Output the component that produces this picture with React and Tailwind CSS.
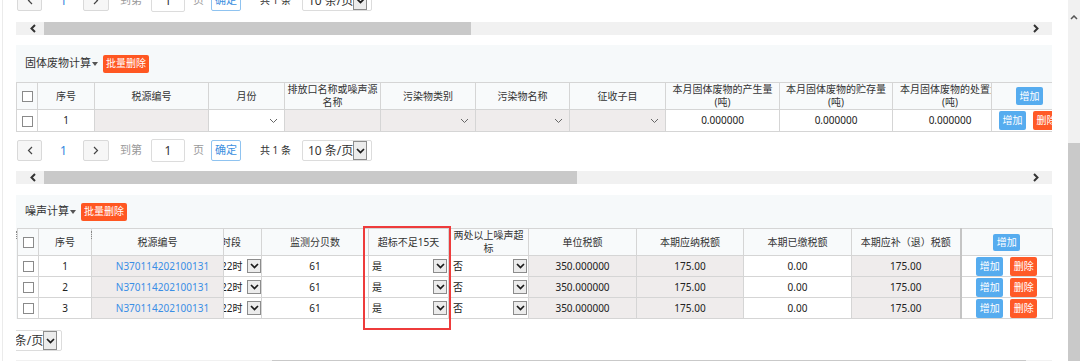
import React from 'react'

const FONT = "font-['Noto_Sans','Noto_Sans_CJK_SC',sans-serif]"
const th = 'border border-[#d5d5d5] bg-[#f8fafb] p-0 text-center align-middle text-[10px] font-normal leading-[13px]'
const td = 'border border-[#d5d5d5] p-0 text-center align-middle text-[10px] leading-[13px]'
const gray = 'bg-[#efecec]'

function Caret() {
  return <span className="ml-[1px] inline-block h-0 w-0 border-x-[3.5px] border-t-[4px] border-x-transparent border-t-[#555] align-middle" />
}

function Thin() {
  return (
    <svg width="9" height="6" viewBox="0 0 9 6">
      <path d="M1 1l3.5 3.5L8 1" fill="none" stroke="#666" strokeWidth="1" />
    </svg>
  )
}

function ArrowBox({ className = 'h-[14px] w-[14px]' }) {
  return (
    <span className={`flex shrink-0 items-center justify-center border border-[#8c8c8c] bg-[#ececec] ${className}`}>
      <svg width="9" height="6" viewBox="0 0 9 6">
        <path d="M1 1l3.5 3.5L8 1" fill="none" stroke="#1a1a1a" strokeWidth="1.7" />
      </svg>
    </span>
  )
}

function Check() {
  return <span className="inline-block h-[11px] w-[11px] border border-[#8a8a8a] bg-white align-middle" />
}

function Btn({ children, red = false, h = 'h-[19px]' }) {
  return (
    <span className={`inline-flex w-[27px] items-center justify-center rounded-[2px] text-[10px] text-white ${h} ${red ? 'bg-[#ff5a27]' : 'bg-[#56acef]'}`}>
      {children}
    </span>
  )
}

function PageSelect() {
  return (
    <span className="flex h-[21px] w-[70px] items-center justify-between whitespace-nowrap rounded-[2px] border border-[#dcdcdc] bg-white pl-[5px] pr-[4px] text-[12px] text-[#333]">
      <span>10 条/页</span>
      <ArrowBox className="h-[19px] w-[14px]" />
    </span>
  )
}

function Arrow({ dir }) {
  return (
    <svg width="6" height="9" viewBox="0 0 6 9">
      <path d={dir === 'left' ? 'M5 1L1.5 4.5 5 8' : 'M1 1l3.5 3.5L1 8'} fill="none" stroke="#444" strokeWidth="1.2" />
    </svg>
  )
}

function Pager({ className = '' }) {
  return (
    <div className={`flex h-[23px] items-center whitespace-nowrap pl-[1px] text-[10px] text-[#333] ${className}`}>
      <span className="flex h-[21px] w-[25px] items-center justify-center rounded-[2px] border border-[#d9d9d9] bg-[#f6f6f6]">
        <Arrow dir="left" />
      </span>
      <span className="ml-[18px] w-[7px] text-[12px] text-[#2f86de]">1</span>
      <span className="ml-[16px] flex h-[21px] w-[26px] items-center justify-center rounded-[2px] border border-[#d9d9d9] bg-[#f6f6f6]">
        <Arrow dir="right" />
      </span>
      <span className="ml-[11px] text-[11px] text-[#9a9a9a]">到第</span>
      <span className="ml-[9px] flex h-[23px] w-[34px] items-center justify-center rounded-[2px] border border-[#dcdcdc] bg-white text-[12px]">1</span>
      <span className="ml-[8px] text-[11px] text-[#9a9a9a]">页</span>
      <span className="ml-[7px] flex h-[21px] w-[30px] items-center justify-center rounded-[2px] border border-[#8fc3f0] bg-white text-[11px] text-[#3d8fe0]">确定</span>
      <span className="ml-[19px]">共 1 条</span>
      <span className="ml-[11px]"><PageSelect /></span>
    </div>
  )
}

function HScroll({ thumb, className = '' }) {
  return (
    <div className={`flex h-[13px] items-center bg-[#f1f1f1] ${className}`}>
      <span className="flex w-[28px] pl-[14px]">
        <svg width="6" height="9" viewBox="0 0 6 9"><path d="M5 1L1.5 4.5 5 8" fill="none" stroke="#333" strokeWidth="2" /></svg>
      </span>
      <span className={`h-full bg-[#c9c9c9] ${thumb}`} />
      <span className="flex flex-1 justify-end pr-[13px]">
        <svg width="6" height="9" viewBox="0 0 6 9"><path d="M1 1l3.5 3.5L1 8" fill="none" stroke="#333" strokeWidth="2" /></svg>
      </span>
    </div>
  )
}

function Title({ text }) {
  return (
    <div className="flex items-center pl-[9px]">
      <span className="text-[11px] text-[#333]">{text}</span>
      <Caret />
      <span className="ml-[5px] flex h-[18px] items-center rounded-[2px] bg-[#ff5722] px-[3px] text-[10px] text-white">批量删除</span>
    </div>
  )
}

function SelCell({ cls }) {
  return (
    <td className={`${td} ${cls}`}>
      <div className="flex justify-end pr-[6px]"><Thin /></div>
    </td>
  )
}

function SolidWaste({ className = '' }) {
  return (
    <div className={`bg-[#f6f9fa] ${className}`}>
      <div className="flex h-[37px] items-center">
        <Title text="固体废物计算" />
      </div>
      <div className="w-[1036px] overflow-hidden">
        <table className="w-[1051px] table-fixed border-collapse text-[#333]">
          <colgroup>
            <col className="w-[21px]" />
            <col className="w-[57px]" />
            <col className="w-[114px]" />
            <col className="w-[76px]" />
            <col className="w-[96px]" />
            <col className="w-[95px]" />
            <col className="w-[94px]" />
            <col className="w-[96px]" />
            <col className="w-[114px]" />
            <col className="w-[113px]" />
            <col className="w-[99px]" />
            <col className="w-[76px]" />
          </colgroup>
          <thead>
            <tr className="h-[25px]">
              <th className={th}><Check /></th>
              <th className={th}>序号</th>
              <th className={th}>税源编号</th>
              <th className={th}>月份</th>
              <th className={th}>排放口名称或噪声源<br />名称</th>
              <th className={th}>污染物类别</th>
              <th className={th}>污染物名称</th>
              <th className={th}>征收子目</th>
              <th className={th}>本月固体废物的产生量<br />(吨)</th>
              <th className={th}>本月固体废物的贮存量<br />(吨)</th>
              <th className={`${th} overflow-hidden`}>
                <div className="w-[114px] whitespace-nowrap">本月固体废物的处置量<br />(吨)</div>
              </th>
              <th className={th}><Btn h="h-[18px]">增加</Btn></th>
            </tr>
          </thead>
          <tbody className="text-[#222]">
            <tr className="h-[22px]">
              <td className={`${td} bg-white`}><Check /></td>
              <td className={`${td} bg-white`}>1</td>
              <td className={`${td} ${gray}`} />
              <SelCell cls="bg-white" />
              <td className={`${td} ${gray}`} />
              <SelCell cls={gray} />
              <SelCell cls={gray} />
              <SelCell cls={gray} />
              <td className={`${td} bg-white`}>0.000000</td>
              <td className={`${td} bg-white`}>0.000000</td>
              <td className={`${td} overflow-hidden bg-white`}>
                <div className="w-[114px]">0.000000</div>
              </td>
              <td className={`${td} bg-white`}>
                <div className="flex justify-center gap-[7px]"><Btn>增加</Btn><Btn red>删除</Btn></div>
              </td>
            </tr>
          </tbody>
        </table>
      </div>
    </div>
  )
}

const noiseRows = ['1', '2', '3']

function Noise({ className = '' }) {
  return (
    <div className={`bg-[#f6f9fa] ${className}`}>
      <div className="flex h-[33px] items-center">
        <Title text="噪声计算" />
      </div>
      <div className="relative pl-[1px]">
        <table className="w-[1035px] table-fixed border-collapse text-[#333]">
          <colgroup>
            <col className="w-[21px]" />
            <col className="w-[53px]" />
            <col className="w-[132px]" />
            <col className="w-[38px]" />
            <col className="w-[107px]" />
            <col className="w-[80px]" />
            <col className="w-[80px]" />
            <col className="w-[108px]" />
            <col className="w-[107px]" />
            <col className="w-[108px]" />
            <col className="w-[109px]" />
            <col className="w-[92px]" />
          </colgroup>
          <thead>
            <tr className="h-[26px]">
              <th className={th}><Check /></th>
              <th className={th}>序号</th>
              <th className={th}>税源编号</th>
              <th className={`${th} overflow-hidden`}>
                <div className="-ml-[3px] text-left whitespace-nowrap">时段</div>
              </th>
              <th className={th}>监测分贝数</th>
              <th className={th}>超标不足15天</th>
              <th className={th}>两处以上噪声超<br />标</th>
              <th className={th}>单位税额</th>
              <th className={th}>本期应纳税额</th>
              <th className={th}>本期已缴税额</th>
              <th className={`${th} border-r-2 border-r-[#c4c4c4]`}>本期应补（退）税额</th>
              <th className={th}><Btn h="h-[17px]">增加</Btn></th>
            </tr>
          </thead>
          <tbody className="text-[#222]">
            {noiseRows.map((n) => (
              <tr key={n} className="h-[21px]">
                <td className={`${td} bg-white`}><Check /></td>
                <td className={`${td} bg-white`}>{n}</td>
                <td className={`${td} ${gray} pl-[10px]`}>
                  <span className="text-[#3a8ee6]">N370114202100131</span>
                </td>
                <td className={`${td} overflow-hidden bg-white`}>
                  <div className="-ml-[3px] flex items-center whitespace-nowrap">
                    <span>22时</span>
                    <span className="ml-[5px]"><ArrowBox /></span>
                  </div>
                </td>
                <td className={`${td} bg-white`}>61</td>
                <td className={`${td} bg-white`}>
                  <div className="flex items-center justify-between pl-[3px] pr-[1px]">
                    <span>是</span>
                    <ArrowBox />
                  </div>
                </td>
                <td className={`${td} bg-white`}>
                  <div className="flex items-center justify-between pl-[4px] pr-[1px]">
                    <span>否</span>
                    <ArrowBox />
                  </div>
                </td>
                <td className={`${td} ${gray}`}>350.000000</td>
                <td className={`${td} ${gray}`}>175.00</td>
                <td className={`${td} bg-white`}>0.00</td>
                <td className={`${td} ${gray} border-r-2 border-r-[#c4c4c4]`}>175.00</td>
                <td className={`${td} bg-white`}>
                  <div className="flex justify-center gap-[7px]"><Btn>增加</Btn><Btn red>删除</Btn></div>
                </td>
              </tr>
            ))}
          </tbody>
        </table>
        <span className="absolute left-0 top-[3px] h-[8px] border-l border-dotted border-[#888]" />
        <span className="absolute left-[75px] top-[3px] h-[8px] border-l border-dotted border-[#888]" />
        <div className="absolute left-[347px] top-[-2px] h-[104px] w-[88px] border-2 border-[#ee3b3b]" />
      </div>
    </div>
  )
}

export default function App() {
  return (
    <div className={`flex h-[361px] w-[1080px] overflow-hidden bg-white ${FONT}`}>
      <div className="ml-[2px] w-[1066px] shrink-0 border-l border-[#ebebeb] pl-[13px] pr-[16px]">
        <div className="-mt-[11px] flex flex-col">
          <Pager />
          <HScroll thumb="w-[427px]" className="mt-[10px]" />
          <SolidWaste className="mt-[10px]" />
          <Pager className="mt-[7px]" />
          <HScroll thumb="w-[533px]" className="mt-[9px]" />
          <Noise className="mt-[11px]" />
          <div className="mt-[11px] h-[21px] w-[47px] overflow-hidden">
            <div className="-ml-[24px]"><PageSelect /></div>
          </div>
          <div className="mt-[9px] flex h-[13px] bg-[#f1f1f1]">
            <span className="ml-[256px] h-full w-[754px] bg-[#c9c9c9]" />
          </div>
        </div>
      </div>
      <div className="flex w-[12px] flex-col bg-[#f1f1f1]">
        <div className="flex h-[143px] justify-center pt-[15px]">
          <svg width="8" height="5" viewBox="0 0 8 5">
            <path d="M1 4l3-3 3 3" fill="none" stroke="#555" strokeWidth="1.5" />
          </svg>
        </div>
        <div className="flex-1 bg-[#c9c9c9]" />
      </div>
    </div>
  )
}
